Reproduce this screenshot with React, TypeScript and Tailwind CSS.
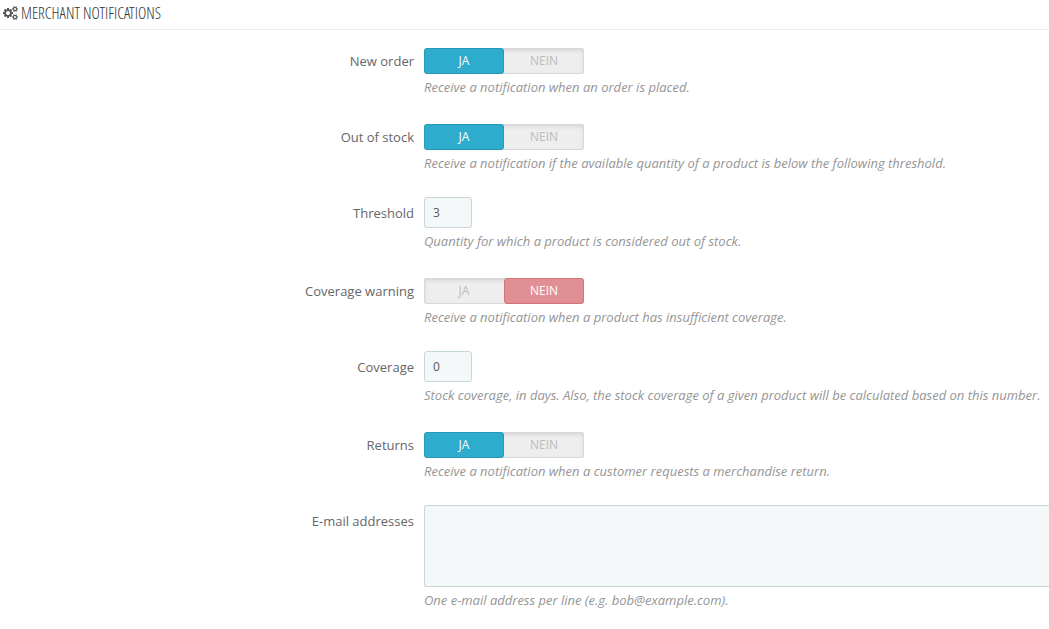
import { useState } from "react";

const SMALL_COG =
  "v140q0 16-149 31-12 27-30 52 51 113 51 138 0 4-4 7-122 71-124 71-8 0-46-47t-52-68q-20 2-30 2t-30-2q-14 21-52 68t-46 47q-2 0-124-71-4-3-4-7 0-25 51-138-18-25-30-52-149-15-149-31v-140q0-16 149-31 13-29 30-52-51-113-51-138 0-4 4-7 4-2 35-20t59-34 30-16q8 0 46 46.5t52 67.5q20-2 30-2t30 2q51-71 92-112l6-2q4 0 124 70 4 3 4 7 0 25-51 138 17 23 30 52 149 15 149 31z";

function CogsIcon() {
  return (
    <svg
      className="h-[14px] w-[15px] shrink-0 text-[#555555]"
      viewBox="0 0 1920 1792"
      fill="currentColor"
      fillRule="evenodd"
      aria-hidden
    >
      <path d="M896 896q0-106-75-181t-181-75-181 75-75 181 75 181 181 75 181-75 75-181zm384-91v185q0 10-7 19.5t-16 10.5l-155 24q-11 35-32 76 34 48 90 115 7 11 7 20 0 12-7 19-23 30-82.5 89.5t-78.5 59.5q-11 0-21-7l-115-90q-37 19-77 31-11 108-23 155-7 24-30 24h-186q-11 0-20-7.5t-10-17.5l-23-153q-34-10-75-31l-118 89q-7 7-20 7-11 0-21-8-144-133-144-160 0-9 7-19 10-14 41-53t47-61q-23-44-35-82l-152-24q-10-1-17-9.5t-7-19.5v-185q0-10 7-19.5t16-10.5l155-24q11-35 32-76-34-48-90-115-7-11-7-20 0-12 7-20 22-30 82-89t79-59q11 0 21 7l115 90q34-18 77-32 11-108 23-154 7-24 30-24h186q11 0 20 7.5t10 17.5l23 153q34 10 75 31l118-89q8-7 20-7 11 0 21 8 144 133 144 160 0 8-7 19-12 16-42 54t-45 60q23 48 34 82l152 23q10 2 17 10.5t7 19.5z" />
      <path
        d={`M1664 1408q0-52-38-90t-90-38-90 38-38 90q0 53 37.5 90.5t90.5 37.5 90.5-37.5 37.5-90.5zM1920 1338${SMALL_COG}`}
      />
      <path
        d={`M1664 384q0-52-38-90t-90-38-90 38-38 90q0 53 37.5 90.5t90.5 37.5 90.5-37.5 37.5-90.5zM1920 314${SMALL_COG}`}
      />
    </svg>
  );
}

interface FieldProps {
  id: string;
  label: string;
  help: string;
  children: React.ReactNode;
}

function Field({ id, label, help, children }: FieldProps) {
  return (
    <div className="flex gap-[10px]">
      <label
        htmlFor={id}
        id={`${id}-label`}
        className="w-[414px] shrink-0 pt-[7px] text-right text-[13px] leading-[18px] text-[#666666]"
      >
        {label}
      </label>
      <div className="min-w-0 flex-1">
        {children}
        <p className="mt-[5px] whitespace-nowrap text-[13px] italic leading-4 text-[#959595]">
          {help}
        </p>
      </div>
    </div>
  );
}

interface SwitchProps {
  id: string;
  defaultOn: boolean;
}

function Switch({ id, defaultOn }: SwitchProps) {
  const [on, setOn] = useState(defaultOn);
  const idle = "border-transparent text-[#bbbbbb]";

  return (
    <div className="pt-[3px]">
      <div
        role="group"
        aria-labelledby={`${id}-label`}
        className="flex h-[26px] w-40 rounded-[3px] bg-[#eeeeee] text-[12px] leading-4 shadow-[inset_0_0_0_1px_#d8d8d8,inset_0_2px_4px_#d0d0d0]"
      >
        <button
          type="button"
          id={id}
          aria-pressed={on}
          onClick={() => setOn(true)}
          className={`flex-1 rounded-[3px] border ${
            on ? "border-[#2598b8] bg-[#2eacce] text-white" : idle
          }`}
        >
          JA
        </button>
        <button
          type="button"
          aria-pressed={!on}
          onClick={() => setOn(false)}
          className={`flex-1 rounded-[3px] border ${
            on ? idle : "border-[#d2757b] bg-[#e08f95] text-white"
          }`}
        >
          NEIN
        </button>
      </div>
    </div>
  );
}

const INPUT_CLASS =
  "block rounded-[3px] border border-[#c7d6db] bg-[#f5f8f9] px-2 text-[12px] text-[#555555] outline-none";

export default function App() {
  return (
    <form className="overflow-hidden bg-white font-['Open_Sans',sans-serif]">
      <h3 className="flex h-[30px] items-center gap-[3px] border-b border-[#eeeeee] px-[3px] pb-1 font-['Open_Sans_Condensed_Light','Open_Sans',sans-serif] text-[16px] leading-5 uppercase text-[#333333]">
        <CogsIcon />
        Merchant notifications
      </h3>

      <div className="flex flex-col gap-[26px] pt-[15px]">
        <Field
          id="new-order"
          label="New order"
          help="Receive a notification when an order is placed."
        >
          <Switch id="new-order" defaultOn />
        </Field>
        <Field
          id="out-of-stock"
          label="Out of stock"
          help="Receive a notification if the available quantity of a product is below the following threshold."
        >
          <Switch id="out-of-stock" defaultOn />
        </Field>
        <Field
          id="threshold"
          label="Threshold"
          help="Quantity for which a product is considered out of stock."
        >
          <input
            id="threshold"
            type="text"
            defaultValue="3"
            className={`${INPUT_CLASS} h-[31px] w-12`}
          />
        </Field>
        <Field
          id="coverage-warning"
          label="Coverage warning"
          help="Receive a notification when a product has insufficient coverage."
        >
          <Switch id="coverage-warning" defaultOn={false} />
        </Field>
        <Field
          id="coverage"
          label="Coverage"
          help="Stock coverage, in days. Also, the stock coverage of a given product will be calculated based on this number."
        >
          <input
            id="coverage"
            type="text"
            defaultValue="0"
            className={`${INPUT_CLASS} h-[31px] w-12`}
          />
        </Field>
        <Field
          id="returns"
          label="Returns"
          help="Receive a notification when a customer requests a merchandise return."
        >
          <Switch id="returns" defaultOn />
        </Field>
        <Field
          id="emails"
          label="E-mail addresses"
          help="One e-mail address per line (e.g. bob@example.com)."
        >
          <textarea
            id="emails"
            className={`${INPUT_CLASS} h-[82px] w-full resize-none rounded-r-none border-r-0`}
          />
        </Field>
      </div>
    </form>
  );
}
